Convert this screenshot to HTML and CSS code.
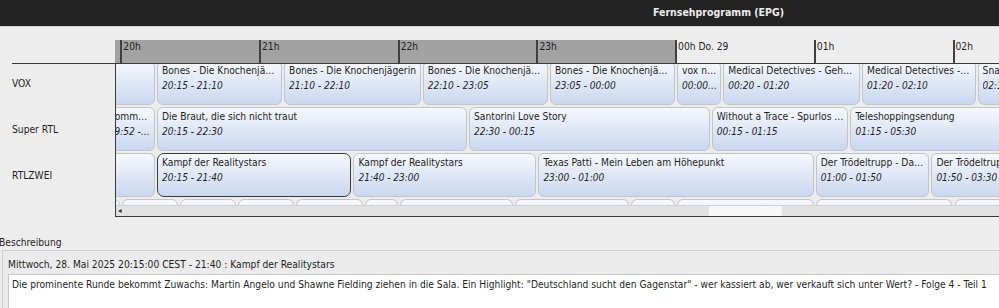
FILE: index.html
```html
<!DOCTYPE html>
<html>
<head>
    <meta http-equiv="Content-Type" content="text/html; charset=utf-8" />
    <title>Fernsehprogramm (EPG)</title>
    <link rel="stylesheet" href="styles.css">
</head>
<body>
    <div class="titlebar">Fernsehprogramm (EPG)</div>

    <div class="epg">
        <div class="epg-head">
            <div class="epg-corner"></div>
            <div class="timeline" id="timeline">
                <div class="timeline-past"></div>
            </div>
        </div>
        <div class="epg-body">
            <div class="channels">
                <div class="channel-list">
                    <div class="channel">VOX</div>
                    <div class="channel">Super RTL</div>
                    <div class="channel">RTLZWEI</div>
                </div>
            </div>
            <div class="grid">
                <div class="grid-rows">
                    <div class="grid-track" id="rows"></div>
                </div>
                <div class="hscroll">
                    <span class="hscroll-arrow">&#9666;</span>
                    <span class="hscroll-thumb" id="thumb"></span>
                </div>
            </div>
        </div>
    </div>

    <div class="desc">
        <div class="desc-label">Beschreibung</div>
        <div class="desc-box">
            <div class="desc-head">Mittwoch, 28. Mai 2025 20:15:00 CEST - 21:40 : Kampf der Realitystars</div>
            <div class="desc-text">Die prominente Runde bekommt Zuwachs: Martin Angelo und Shawne Fielding ziehen in die Sala. Ein Highlight: "Deutschland sucht den Gagenstar" - wer kassiert ab, wer verkauft sich unter Wert? - Folge 4 - Teil 1</div>
        </div>
    </div>

    <script>
        // minutes are counted from 20:00
        var HOUR = 138.7;
        var ORIGIN = 5.3;

        var programme = [
            [
                ["Das perfekte Dinner", -60, 15],
                ["Bones - Die Knochenjägerin", 15, 70],
                ["Bones - Die Knochenjägerin", 70, 130],
                ["Bones - Die Knochenjägerin", 130, 185],
                ["Bones - Die Knochenjägerin", 185, 240],
                ["vox nachrichten", 240, 260],
                ["Medical Detectives - Geheimnisse der Gerichtsmedizin", 260, 320],
                ["Medical Detectives - Geheimnisse der Gerichtsmedizin", 320, 370],
                ["Snapped - Wenn Frauen töten", 370, 420]
            ],
            [
                ["Sommerhaus der Stars", -8, 15],
                ["Die Braut, die sich nicht traut", 15, 150],
                ["Santorini Love Story", 150, 255],
                ["Without a Trace - Spurlos verschwunden", 255, 315],
                ["Teleshoppingsendung", 315, 570]
            ],
            [
                ["RTLZWEI News", -55, 15],
                ["Kampf der Realitystars", 15, 100, true],
                ["Kampf der Realitystars", 100, 180],
                ["Texas Patti - Mein Leben am Höhepunkt", 180, 300],
                ["Der Trödeltrupp - Das Geld liegt im Keller", 300, 350],
                ["Der Trödeltrupp - Das Geld liegt im Keller", 350, 450]
            ],
            [
                ["", -30, 0], ["", 0, 25], ["", 25, 50], ["", 50, 75],
                ["", 75, 105], ["", 105, 120], ["", 120, 170], ["", 170, 220],
                ["", 220, 240], ["", 240, 300], ["", 300, 360], ["", 360, 420]
            ]
        ];

        function f_x(min) {
            return ORIGIN + HOUR * min / 60;
        }

        function f_pad(n) {
            return (n < 10 ? "0" : "") + n;
        }

        function f_clock(min) {
            var t = (1200 + min + 1440) % 1440;
            return f_pad(Math.floor(t / 60)) + ":" + f_pad(t % 60);
        }

        function f_buildTimeline() {
            var timeline = document.getElementById("timeline");
            var labels = ["20h", "21h", "22h", "23h", "00h Do. 29", "01h", "02h", "03h"];

            for (var i = 0; i < labels.length; i++) {
                var tick = document.createElement("div");
                tick.className = "tick";
                tick.style.left = f_x(i * 60) + "px";
                tick.textContent = labels[i];
                timeline.appendChild(tick);
            }
        }

        function f_buildRows() {
            var rows = document.getElementById("rows");

            for (var r = 0; r < programme.length; r++) {
                var row = document.createElement("div");
                row.className = "row";

                for (var i = 0; i < programme[r].length; i++) {
                    var p = programme[r][i];
                    var cell = document.createElement("div");
                    cell.className = p[3] ? "cell selected" : "cell";
                    cell.style.left = (f_x(p[1]) + 1) + "px";
                    cell.style.width = (f_x(p[2]) - f_x(p[1]) - 2) + "px";

                    if (p[0]) {
                        var title = document.createElement("div");
                        title.className = "cell-title";
                        title.textContent = p[0];
                        var time = document.createElement("div");
                        time.className = "cell-time";
                        time.textContent = f_clock(p[1]) + " - " + f_clock(p[2]);
                        cell.appendChild(title);
                        cell.appendChild(time);
                    }
                    row.appendChild(cell);
                }
                rows.appendChild(row);
            }
        }

        f_buildTimeline();
        f_buildRows();
        document.getElementById("thumb").style.left = "593px";
    </script>
</body>
</html>
```
FILE: styles.css
```css
* {
    margin: 0;
    padding: 0;
    box-sizing: border-box;
}

html, body {
    width: 100%;
    height: 100%;
    overflow: hidden;
}

body {
    background: #ededed;
    font-family: "DejaVu Sans Condensed", "DejaVu Sans", sans-serif;
    font-size: 10.2px;
    color: #1f1f1f;
}

.titlebar {
    height: 27px;
    line-height: 25px;
    padding-left: 653px;
    background: #232323;
    border-bottom: 1px solid #d6d6d6;
    color: #ececec;
    font-size: 10.5px;
    font-weight: bold;
}

.epg {
    margin-top: 13px;
}

.epg-head {
    display: flex;
    height: 24px;
    margin-left: 12px;
    border-bottom: 1px solid #3a3a3a;
}

.epg-corner {
    width: 103px;
}

.timeline {
    flex: 1;
    position: relative;
    overflow: hidden;
}

.timeline-past {
    position: absolute;
    top: 0;
    bottom: 0;
    left: 0;
    width: 562px;
    background: #a2a2a2;
}

.tick {
    position: absolute;
    top: 0;
    bottom: 0;
    padding-left: 1px;
    border-left: 2px solid #404040;
    line-height: 13px;
    white-space: nowrap;
    color: #1e1e1e;
}

.epg-body {
    display: flex;
    height: 153px;
}

.channels {
    width: 115px;
    padding-left: 12px;
    overflow: hidden;
}

.channel-list {
    display: flex;
    flex-direction: column;
    gap: 2px;
    margin-top: -2px;
}

.channel {
    height: 44px;
    line-height: 44px;
}

.grid {
    flex: 1;
    min-width: 0;
    display: flex;
    flex-direction: column;
    border-left: 1px solid #3a3a3a;
    border-bottom: 1px solid #3a3a3a;
    background: #ececec;
}

.grid-rows {
    flex: 1;
    overflow: hidden;
}

.grid-track {
    display: flex;
    flex-direction: column;
    gap: 2px;
    margin-top: -3px;
}

.row {
    position: relative;
    height: 44px;
    flex-shrink: 0;
}

.cell {
    position: absolute;
    top: 0;
    height: 44px;
    padding: 2px 3px 0 4px;
    border: 1px solid #c3c5ca;
    border-radius: 6px;
    background: linear-gradient(#f6f8fc, #c9d7ef);
}

    .cell.selected {
        border-color: #3a3a3a;
        border-radius: 7px;
    }

.cell-title,
.cell-time {
    white-space: nowrap;
    overflow: hidden;
    text-overflow: ellipsis;
}

.cell-title {
    line-height: 14px;
}

.cell-time {
    line-height: 15px;
    font-size: 10px;
    font-style: italic;
}

.hscroll {
    position: relative;
    display: flex;
    align-items: center;
    height: 11px;
    flex-shrink: 0;
    border-top: 1px solid #d2d2d2;
    background: #e2e2e2;
}

.hscroll-arrow {
    padding-left: 2px;
    font-size: 8px;
    line-height: 10px;
    color: #333;
}

.hscroll-thumb {
    position: absolute;
    top: 0;
    bottom: 0;
    width: 73px;
    background: #f7f7f7;
}

.desc-label {
    margin-top: 18px;
    margin-left: -1px;
    line-height: 15px;
}

.desc-box {
    margin-left: 2px;
    margin-right: -20px;
    padding-left: 5px;
    height: 80px;
    border: 1px solid #cfcfcf;
    background: #ebebeb;
}

.desc-head {
    padding-top: 7px;
    line-height: 14px;
}

.desc-text {
    margin-top: 2px;
    height: 60px;
    padding: 3px 3px;
    line-height: 14px;
    white-space: nowrap;
    border: 1px solid #c9c9c9;
    background: #fff;
}
```
